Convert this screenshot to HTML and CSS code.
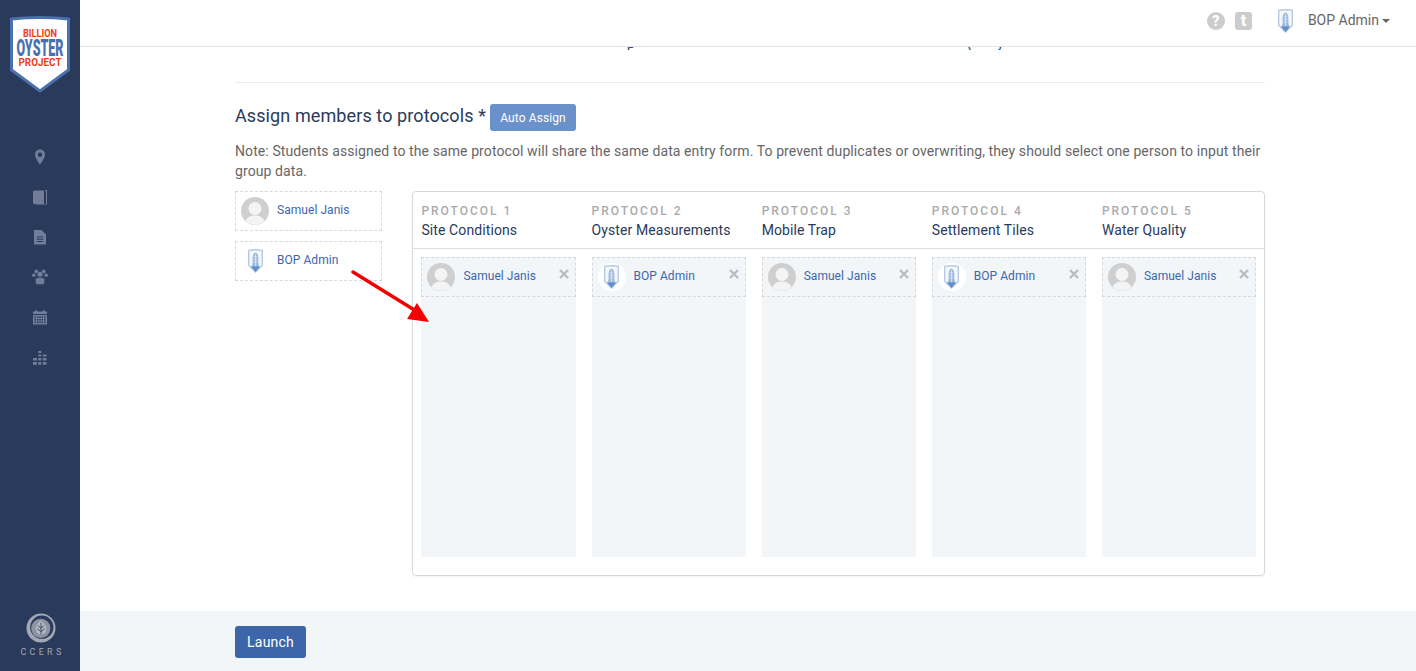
FILE: index.html
```html
<!DOCTYPE html>
<html lang="en">

<head>
    <meta charset="UTF-8">
    <meta name="viewport" content="width=device-width, initial-scale=1.0">
    <title>Assign members to protocols</title>
    <link rel="stylesheet" href="styles.css">
</head>

<body>
    <!-- Shared drawings -->
    <svg class="defs" width="0" height="0">
        <symbol id="bop-mark" viewBox="0 0 20 28">
            <path d="M2 1.5 Q10 0 18 1.5 V19 L10 27 L2 19 Z" fill="#f4f7fb" stroke="#b5c9e3" stroke-width="1.6"/>
            <path d="M10 4 C13 5 13.5 9 13.5 13 C13.5 16 13 18.5 15 21 H5 C7 18.5 6.5 16 6.5 13 C6.5 9 7 5 10 4 Z" fill="#9db9dc"/>
            <path d="M10 6 V20 M8 9 H12 M7.8 12 H12.2 M7.8 15 H12.2" stroke="#e9f0f8" stroke-width=".8" fill="none"/>
            <path d="M4.6 20.5 H15.4 L10 26.8 Z" fill="#5f8fc9"/>
        </symbol>
        <symbol id="person" viewBox="0 0 28 28">
            <circle cx="14" cy="14" r="14" fill="#cfcfcf"/>
            <circle cx="14" cy="11.5" r="6.5" fill="#f4f4f4"/>
            <path d="M4.5 24 C7 19.5 10 18.5 14 18.5 C18 18.5 21 19.5 23.5 24 A14 14 0 0 1 4.5 24 Z" fill="#f4f4f4"/>
        </symbol>
        <symbol id="close" viewBox="0 0 10 10">
            <path d="M1 1 L9 9 M9 1 L1 9" stroke="#b9bcc0" stroke-width="2.4" fill="none"/>
        </symbol>
    </svg>

    <aside class="sidebar">
        <svg class="brand" width="62" height="77" viewBox="0 0 62 77">
            <path d="M2.5 3 Q31 0 59.5 3 V54 L31 75 L2.5 54 Z" fill="#fff" stroke="#4a70b0" stroke-width="3"/>
            <text x="31" y="20.5" class="brand-red" font-size="11.5" text-anchor="middle" textLength="34" lengthAdjust="spacingAndGlyphs">BILLION</text>
            <text x="31" y="40" class="brand-blue" font-size="24" text-anchor="middle" textLength="47" lengthAdjust="spacingAndGlyphs">OYSTER</text>
            <text x="31" y="50" class="brand-red" font-size="11.5" text-anchor="middle" textLength="43" lengthAdjust="spacingAndGlyphs">PROJECT</text>
        </svg>

        <nav class="side-nav">
            <svg class="side-icon" viewBox="0 0 16 16"><path fill-rule="evenodd" d="M8 .5 C5 .5 3 2.8 3 5.6 C3 9.5 8 15.5 8 15.5 C8 15.5 13 9.5 13 5.6 C13 2.8 11 .5 8 .5 Z M8 3.4 A2.3 2.3 0 1 1 8 8 A2.3 2.3 0 0 1 8 3.4 Z"/></svg>
            <svg class="side-icon" viewBox="0 0 16 16"><path d="M1 3 Q1 1.5 2.5 1.5 H12 V15 H2.5 Q1 15 1 13.5 Z"/><path d="M13 1 H15 V15.5 H3.5 V15 H14 V2 H13 Z"/></svg>
            <svg class="side-icon" viewBox="0 0 16 16"><path fill-rule="evenodd" d="M2 1 H9.5 L14 5.5 V15.5 H2 Z M4.8 7.5 V8.5 H11.2 V7.5 Z M4.8 9.8 V10.8 H11.2 V9.8 Z M4.8 12 V13 H11.2 V12 Z"/></svg>
            <svg class="side-icon" viewBox="0 0 16 16"><circle cx="4.3" cy="2.4" r="1.9"/><circle cx="11.7" cy="2.4" r="1.9"/><circle cx="1.8" cy="6.2" r="1.8"/><circle cx="14.2" cy="6.2" r="1.8"/><path d="M3.4 15 V11 Q3.4 8.6 6 8.6 H10 Q12.6 8.6 12.6 11 V15 Q8 16.4 3.4 15 Z" stroke="#2a3a5b" stroke-width=".6"/><circle cx="8" cy="5.2" r="3" stroke="#2a3a5b" stroke-width=".6"/></svg>
            <svg class="side-icon" viewBox="0 0 16 16"><path fill-rule="evenodd" d="M1 2.5 H3.5 V1 H5 V2.5 H11 V1 H12.5 V2.5 H15 V5 H1 Z M1 6 H15 V15.5 H1 Z M2.5 7.5 V9 H4 V7.5 Z M5 7.5 V9 H6.5 V7.5 Z M7.3 7.5 V9 H8.8 V7.5 Z M9.6 7.5 V9 H11 V7.5 Z M12 7.5 V9 H13.5 V7.5 Z M2.5 10 V11.5 H4 V10 Z M5 10 V11.5 H6.5 V10 Z M7.3 10 V11.5 H8.8 V10 Z M9.6 10 V11.5 H11 V10 Z M12 10 V11.5 H13.5 V10 Z M2.5 12.5 V14 H4 V12.5 Z M5 12.5 V14 H6.5 V12.5 Z M7.3 12.5 V14 H8.8 V12.5 Z M9.6 12.5 V14 H11 V12.5 Z M12 12.5 V14 H13.5 V12.5 Z"/></svg>
            <svg class="side-icon bars-icon" viewBox="0 0 16 16"><path d="M6.3 1 H9.3 V3 H6.3 Z M6.3 4.5 H9.3 V6.5 H6.3 Z M10.8 4.5 H14.5 V6.5 H10.8 Z M6.3 8 H9.3 V10.5 H6.3 Z M10.8 8 H14.5 V10.5 H10.8 Z M1 8 H5 V10.5 H1 Z M1 12 H5 V14.8 H1 Z M6.3 12 H9.3 V14.8 H6.3 Z M10.8 12 H14.5 V14.8 H10.8 Z"/></svg>
        </nav>

        <div class="ccers">
            <svg width="30" height="30" viewBox="0 0 30 30">
                <circle cx="15" cy="15" r="14.5" fill="#a3a8b4"/>
                <circle cx="15.8" cy="14.2" r="11.6" fill="#2a3a5b"/>
                <circle cx="14.8" cy="15.4" r="9.6" fill="#8d93a3"/>
                <path d="M15 7.5 C18.5 10 20.8 13 20.2 16.8 C19.8 19.8 17.2 21.6 15 21.6 C12.8 21.6 10.2 19.8 9.8 16.8 C9.2 13 11.5 10 15 7.5 Z" fill="#b4b8c2"/>
                <path d="M15 9.5 V21.6 M15 15 L11.8 12.6 M15 15 L18.2 12.6 M15 18.5 L11.2 15.8 M15 18.5 L18.8 15.8" stroke="#2a3a5b" stroke-width=".8" fill="none"/>
            </svg>
            <span class="ccers-name">CCERS</span>
        </div>
    </aside>

    <div class="page">
        <header class="topbar">
            <span class="help-icon">?</span>
            <span class="tumblr-icon">t</span>
            <svg class="topbar-logo" width="17" height="24"><use href="#bop-mark"/></svg>
            <span class="user-name">BOP Admin</span>
            <span class="caret"></span>
        </header>

        <main class="content">
            <!-- Line scrolled almost out of view under the top bar -->
            <div class="scrolled-line">
                <span class="tail-p">p</span>
                <span class="tail-paren">(</span>
                <span class="tail-y">y</span>
            </div>
            <hr class="rule">

            <div class="title-row">
                <h2>Assign members to protocols *</h2>
                <button class="auto-btn" type="button">Auto Assign</button>
            </div>
            <p class="note">Note: Students assigned to the same protocol will share the same data entry form. To prevent duplicates or overwriting, they should select one person to input their group data.</p>

            <div class="assign">
                <div class="members">
                    <div class="chip">
                        <svg class="avatar" width="28" height="28"><use href="#person"/></svg>
                        <span class="chip-name">Samuel Janis</span>
                    </div>
                    <div class="chip">
                        <span class="avatar logo-avatar"><svg width="17" height="24"><use href="#bop-mark"/></svg></span>
                        <span class="chip-name">BOP Admin</span>
                    </div>
                </div>

                <div class="panel">
                    <div class="panel-head">
                        <div><div class="proto-label">PROTOCOL 1</div><div class="proto-name">Site Conditions</div></div>
                        <div><div class="proto-label">PROTOCOL 2</div><div class="proto-name">Oyster Measurements</div></div>
                        <div><div class="proto-label">PROTOCOL 3</div><div class="proto-name">Mobile Trap</div></div>
                        <div><div class="proto-label">PROTOCOL 4</div><div class="proto-name">Settlement Tiles</div></div>
                        <div><div class="proto-label">PROTOCOL 5</div><div class="proto-name">Water Quality</div></div>
                    </div>
                    <div class="panel-body">
                        <div class="drop">
                            <div class="chip">
                                <svg class="avatar" width="28" height="28"><use href="#person"/></svg>
                                <span class="chip-name">Samuel Janis</span>
                                <svg class="remove" width="10" height="10"><use href="#close"/></svg>
                            </div>
                        </div>
                        <div class="drop">
                            <div class="chip">
                                <span class="avatar logo-avatar"><svg width="17" height="24"><use href="#bop-mark"/></svg></span>
                                <span class="chip-name">BOP Admin</span>
                                <svg class="remove" width="10" height="10"><use href="#close"/></svg>
                            </div>
                        </div>
                        <div class="drop">
                            <div class="chip">
                                <svg class="avatar" width="28" height="28"><use href="#person"/></svg>
                                <span class="chip-name">Samuel Janis</span>
                                <svg class="remove" width="10" height="10"><use href="#close"/></svg>
                            </div>
                        </div>
                        <div class="drop">
                            <div class="chip">
                                <span class="avatar logo-avatar"><svg width="17" height="24"><use href="#bop-mark"/></svg></span>
                                <span class="chip-name">BOP Admin</span>
                                <svg class="remove" width="10" height="10"><use href="#close"/></svg>
                            </div>
                        </div>
                        <div class="drop">
                            <div class="chip">
                                <svg class="avatar" width="28" height="28"><use href="#person"/></svg>
                                <span class="chip-name">Samuel Janis</span>
                                <svg class="remove" width="10" height="10"><use href="#close"/></svg>
                            </div>
                        </div>
                    </div>
                </div>
            </div>
        </main>

        <footer class="footer">
            <button class="launch-btn" type="button">Launch</button>
        </footer>
    </div>

    <!-- Annotation arrow drawn over the page -->
    <svg class="arrow" width="90" height="60" viewBox="0 0 90 60">
        <path d="M3 2 L66 41" stroke="#f40000" stroke-width="3.4" stroke-linecap="round" fill="none"/>
        <path d="M79 52 L57 49 L67 33 Z" fill="#f40000"/>
    </svg>
</body>

</html>
```

FILE: styles.css
```css
* {
    box-sizing: border-box;
}

html,
body {
    height: 100%;
}

body {
    margin: 0;
    display: flex;
    overflow: hidden;
    font-family: 'Roboto', 'Liberation Sans', sans-serif;
    font-size: 14px;
    color: #2a3a5b;
    background-color: #fff;
}

.defs {
    position: absolute;
}

/* Left sidebar */
.sidebar {
    width: 80px;
    flex-shrink: 0;
    display: flex;
    flex-direction: column;
    align-items: center;
    background-color: #2a3a5b;
}

.brand {
    margin-top: 16px;
    display: block;
}

.brand text {
    font-family: 'Roboto', 'Liberation Sans', sans-serif;
    font-weight: 700;
}

.brand .brand-blue {
    font-weight: 900;
}

.brand-red {
    fill: #f03c1e;
}

.brand-blue {
    fill: #4a70b0;
}

.side-nav {
    margin-top: 56px;
    display: flex;
    flex-direction: column;
    align-items: center;
    gap: 24px;
}

.side-icon {
    width: 16px;
    height: 16px;
    display: block;
    fill: #727d9a;
}

.bars-icon {
    margin-top: 1px;
}

.ccers {
    margin-top: auto;
    margin-bottom: 14px;
    margin-left: 2px;
    display: flex;
    flex-direction: column;
    align-items: center;
    gap: 4px;
}

.ccers-name {
    font-size: 9px;
    line-height: 10px;
    letter-spacing: 3.3px;
    margin-right: -3px;
    color: #a3a8b4;
}

/* Main column */
.page {
    flex: 1;
    min-width: 0;
    display: flex;
    flex-direction: column;
}

.topbar {
    height: 47px;
    flex-shrink: 0;
    display: flex;
    align-items: center;
    padding-right: 26px;
    border-bottom: 1px solid #e4e4e4;
    justify-content: flex-end;
    padding-bottom: 5px;
}

.help-icon {
    width: 18px;
    height: 18px;
    border-radius: 50%;
    background-color: #ccc;
    color: #fff;
    font-size: 14px;
    font-weight: 900;
    line-height: 18px;
    text-align: center;
}

.tumblr-icon {
    width: 17px;
    height: 18px;
    margin-left: 10px;
    border-radius: 3px;
    background-color: #ccc;
    color: #fff;
    font-size: 16px;
    font-weight: 900;
    line-height: 18px;
    text-align: center;
}

.topbar-logo {
    margin-left: 25px;
}

.user-name {
    margin-left: 14px;
    margin-bottom: 2px;
    color: #666;
    font-size: 14px;
}

.caret {
    margin-left: 3px;
    border-top: 4px solid #666;
    border-left: 4px solid transparent;
    border-right: 4px solid transparent;
}

.content {
    flex: 1;
    padding: 0 151px 0 155px;
}

.scrolled-line {
    height: 3px;
    position: relative;
    overflow: hidden;
    font-size: 14px;
    line-height: 20px;
}

.scrolled-line span {
    position: absolute;
    top: -14px;
}

.tail-p {
    left: 392px;
}

.tail-paren {
    left: 732px;
}

.tail-y {
    left: 762px;
}

.rule {
    margin: 32px 0 0;
    border: 0;
    border-top: 1px solid #ececec;
}

.title-row {
    margin-top: 21px;
    display: flex;
    align-items: center;
    gap: 4px;
}

.title-row h2 {
    margin: 0 0 4px;
    font-size: 18px;
    font-weight: 400;
    letter-spacing: .1px;
    color: #2a3a5b;
}

.auto-btn {
    height: 27px;
    width: 86px;
    padding: 0;
    border: none;
    border-radius: 3px;
    background-color: #6a91c9;
    color: #fff;
    font-family: inherit;
    font-size: 12px;
    letter-spacing: .1px;
}

.note {
    margin: 10px 0 10px;
    line-height: 20px;
    color: #666;
    letter-spacing: .095px;
}

.assign {
    display: flex;
    align-items: flex-start;
    gap: 30px;
}

.members {
    width: 147px;
    flex-shrink: 0;
    display: flex;
    flex-direction: column;
    gap: 10px;
}

.chip {
    height: 40px;
    display: flex;
    align-items: center;
    padding-left: 5px;
    padding-right: 6px;
    border: 1px dashed #d8d8d8;
    font-size: 12px;
    letter-spacing: .05px;
    color: #3d66aa;
}

.chip-name {
    margin-bottom: 2px;
}

.avatar {
    width: 28px;
    height: 28px;
    flex-shrink: 0;
    margin-right: 8px;
}

.logo-avatar {
    display: flex;
    align-items: center;
    justify-content: center;
    border-radius: 50%;
    background-color: #fff;
}

.members .logo-avatar {
    background-color: transparent;
}

.remove {
    margin-left: auto;
    margin-bottom: 6px;
}

.panel {
    flex: 1;
    height: 385px;
    border: 1px solid #d8d8d8;
    border-radius: 4px;
    box-shadow: 0 1px 2px rgba(0, 0, 0, 0.05);
}

.panel-head {
    height: 57px;
    padding-top: 11px;
    border-bottom: 1px solid #dedede;
}

.panel-head,
.panel-body {
    display: grid;
    grid-template-columns: repeat(5, 1fr);
    column-gap: 16px;
    padding-left: 8.4px;
    padding-right: 8px;
}

.proto-label {
    font-size: 12px;
    font-weight: 500;
    line-height: 16px;
    letter-spacing: 2px;
    color: #aaa;
}

.proto-name {
    margin-top: 1px;
    line-height: 20px;
    letter-spacing: .1px;
    color: #2a3a5b;
}

.panel-body {
    padding-top: 8px;
}

.drop {
    height: 300px;
    background-color: #f2f6f9;
}

/* Footer bar */
.footer {
    height: 60px;
    flex-shrink: 0;
    display: flex;
    align-items: center;
    padding-left: 155px;
    padding-top: 2px;
    background-color: #f2f6f9;
}

.launch-btn {
    width: 71px;
    height: 32px;
    padding: 0;
    border: none;
    border-radius: 3px;
    background-color: #3d66aa;
    color: #fff;
    font-family: inherit;
    font-size: 14px;
    letter-spacing: .2px;
}

.arrow {
    position: absolute;
    left: 350px;
    top: 270px;
}
```
